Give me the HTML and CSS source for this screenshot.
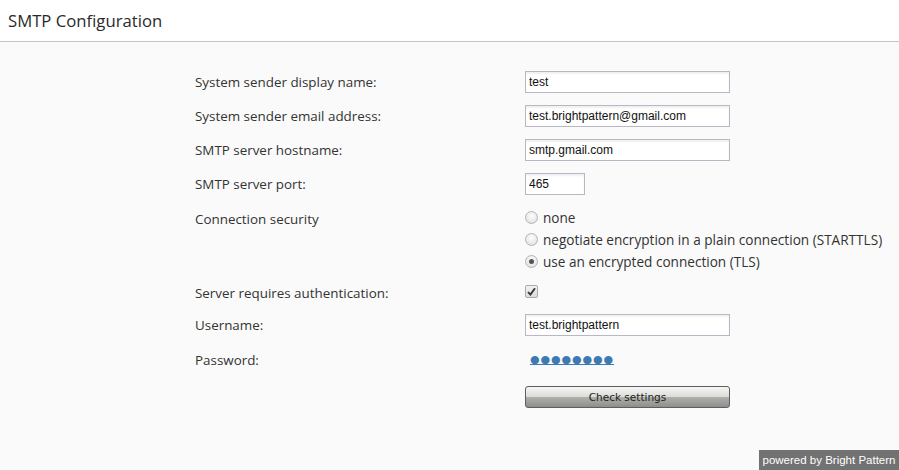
FILE: index.html
```html
<!DOCTYPE html>
<html>
<head>
<meta charset="utf-8">
<link rel="stylesheet" href="styles.css">
</head>
<body>
<div class="header"><h1 class="title">SMTP Configuration</h1></div>
<div class="form">
  <div class="label">System sender display name:</div>
  <div class="value"><input class="text wide" type="text" value="test"></div>

  <div class="label">System sender email address:</div>
  <div class="value"><input class="text wide" type="text" value="test.brightpattern@gmail.com"></div>

  <div class="label">SMTP server hostname:</div>
  <div class="value"><input class="text wide" type="text" value="smtp.gmail.com"></div>

  <div class="label">SMTP server port:</div>
  <div class="value"><input class="text port" type="text" value="465"></div>

  <div class="label label-top">Connection security</div>
  <div class="value radios">
    <label class="radio-row"><span class="radio"></span>none</label>
    <label class="radio-row"><span class="radio"></span>negotiate encryption in a plain connection (STARTTLS)</label>
    <label class="radio-row"><span class="radio checked"></span>use an encrypted connection (TLS)</label>
  </div>

  <div class="label label-check">Server requires authentication:</div>
  <div class="value check-cell"><span class="checkbox"><svg width="9" height="9" viewBox="0 0 9 9"><path d="M1 5 L3.4 7.6 L8 1.2" fill="none" stroke="#333" stroke-width="1.8"/></svg></span></div>

  <div class="label">Username:</div>
  <div class="value"><input class="text wide" type="text" value="test.brightpattern"></div>

  <div class="label label-pw">Password:</div>
  <div class="value value-pw"><a class="password" href="#">●●●●●●●●</a></div>

  <div class="label"></div>
  <div class="value"><button class="btn" type="button">Check settings</button></div>
</div>
<div class="powered">powered by Bright Pattern</div>
</body>
</html>
```

FILE: styles.css
```css
html, body {
  margin: 0;
  padding: 0;
  background: #fafafa;
  height: 100%;
}
body {
  position: relative;
  font-family: "Open Sans", "DejaVu Sans", sans-serif;
  color: #333;
  overflow: hidden;
}
.header {
  background: #ffffff;
  height: 41px;
  border-bottom: 1px solid #c4c4c4;
  display: flex;
  align-items: center;
  padding-left: 8px;
}
.title {
  margin: 0;
  font-weight: normal;
  font-size: 16.7px;
  color: #2a2a2a;
}
.form {
  display: grid;
  grid-template-columns: 330px 400px;
  row-gap: 12px;
  padding: 29px 0 0 195px;
}
.label {
  font-size: 13.4px;
  color: #333;
  display: flex;
  align-items: center;
  min-height: 22px;
}
.label-top {
  align-items: flex-start;
  padding-top: 3px;
}
.label-check {
  min-height: 18px;
  align-items: flex-start;
}
.label-pw {
  min-height: 20px;
  padding-top: 2px;
}
.value {
  display: flex;
  align-items: center;
  min-height: 22px;
}
.value-pw {
  min-height: 20px;
}
.text {
  box-sizing: border-box;
  height: 22px;
  border: 1px solid #b8b8c4;
  background: #fff;
  font-family: "Liberation Sans", Arial, sans-serif;
  font-size: 12px;
  color: #111;
  padding: 0 3px;
  margin: 0;
  box-shadow: inset 0 2px 2px rgba(0,0,0,0.06);
  outline: none;
}
.wide { width: 205px; }
.port { width: 60px; }
.radios {
  flex-direction: column;
  align-items: flex-start;
  margin-top: -1px;
}
.radio-row {
  height: 22px;
  display: flex;
  align-items: center;
  font-size: 13.6px;
  color: #333;
  white-space: nowrap;
}
.radio {
  box-sizing: border-box;
  width: 13px;
  height: 13px;
  border-radius: 50%;
  border: 1px solid #b4b4b4;
  background: radial-gradient(circle at 50% 35%, #fdfdfd 0%, #e6e6e6 70%, #d4d4d4 100%);
  margin-right: 5px;
  position: relative;
  flex: none;
}
.radio.checked::after {
  content: "";
  position: absolute;
  left: 3px;
  top: 3px;
  width: 5px;
  height: 5px;
  border-radius: 50%;
  background: #555;
}
.check-cell {
  min-height: 18px;
  align-items: flex-start;
}
.checkbox {
  box-sizing: border-box;
  width: 13px;
  height: 13px;
  border: 1px solid #aaa;
  border-radius: 2px;
  background: linear-gradient(#f2f2f2, #dcdcdc);
  display: flex;
  align-items: center;
  justify-content: center;
  margin-top: 1px;
}
.password {
  color: #3d7ab3;
  font-family: "DejaVu Sans", sans-serif;
  font-size: 11px;
  letter-spacing: 0.9px;
  text-decoration: underline;
  padding-left: 5px;
}
.btn {
  margin-top: 4px;
  width: 205px;
  height: 22px;
  border: 1px solid #5e5e5e;
  border-radius: 3px;
  background: linear-gradient(#f6f6f4 0%, #dcdcd8 48%, #aeaeaa 52%, #8e8e8a 100%);
  font-family: "DejaVu Sans", sans-serif;
  font-size: 10.5px;
  color: #222;
  padding: 0;
  cursor: pointer;
}
.powered {
  position: absolute;
  right: 0;
  bottom: 0;
  width: 140px;
  height: 20px;
  background: #727272;
  color: #fff;
  font-family: "Liberation Sans", Arial, sans-serif;
  font-size: 11.5px;
  display: flex;
  align-items: center;
  justify-content: center;
}
```
